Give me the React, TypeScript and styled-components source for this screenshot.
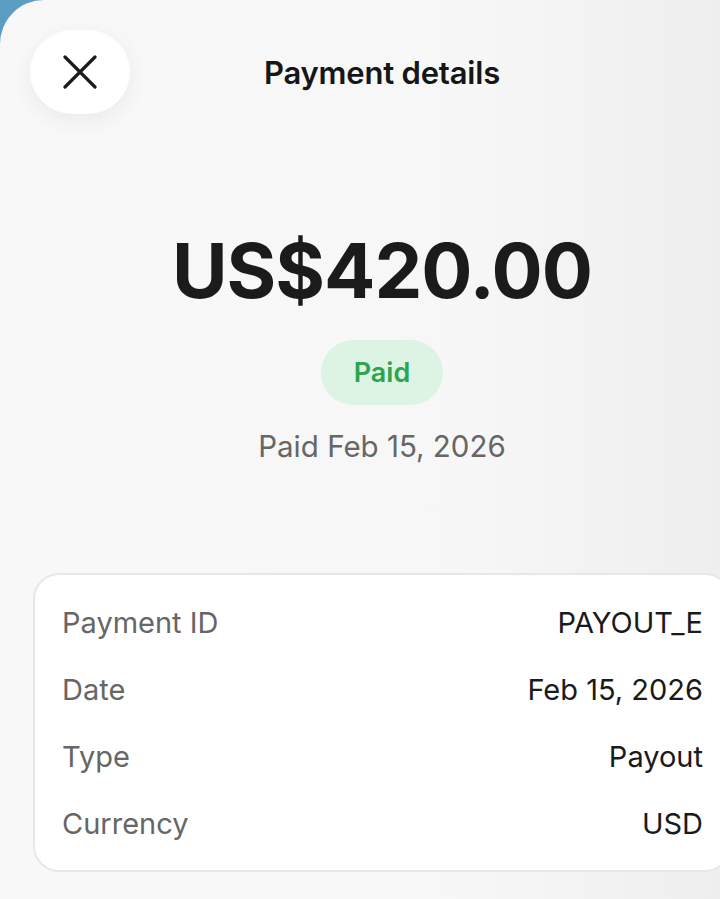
import styled, { createGlobalStyle } from 'styled-components';

const GlobalStyle = createGlobalStyle`
  html, body {
    margin: 0;
    padding: 0;
    background: #5b9ec4;
    overflow: hidden;
  }
  body {
    font-family: Inter, "Noto Sans", sans-serif;
    -webkit-font-smoothing: antialiased;
  }
`;

const Sheet = styled.div`
  width: 764px;
  height: 899px;
  border-top-left-radius: 44px;
  background: linear-gradient(90deg, #f8f8f8 0%, #f7f7f7 60%, #ededed 100%);
  display: flex;
  flex-direction: column;
  align-items: center;
  box-sizing: border-box;
  padding-top: 30px;
`;

const Header = styled.div`
  position: relative;
  width: 100%;
  height: 84px;
  display: flex;
  align-items: center;
  justify-content: center;
`;

const CloseButton = styled.button`
  position: absolute;
  left: 30px;
  top: 0;
  width: 100px;
  height: 84px;
  border: none;
  border-radius: 42px;
  background: #ffffff;
  box-shadow: 0 6px 22px rgba(0, 0, 0, 0.06);
  display: flex;
  align-items: center;
  justify-content: center;
  padding: 0;
`;

const Title = styled.h1`
  margin: 0;
  font-size: 31px;
  font-weight: 600;
  color: #161616;
  letter-spacing: -0.2px;
`;

const Amount = styled.div`
  margin-top: 118px;
  font-size: 76px;
  line-height: 1;
  font-weight: 700;
  color: #1b1b1b;
  letter-spacing: -1px;
`;

const Badge = styled.div`
  margin-top: 32px;
  width: 122px;
  height: 65px;
  border-radius: 33px;
  background: #ddf3e3;
  color: #2ea44f;
  font-size: 27px;
  font-weight: 600;
  display: flex;
  align-items: center;
  justify-content: center;
`;

const PaidOn = styled.div`
  margin-top: 24px;
  font-size: 29.5px;
  line-height: 34px;
  color: #666666;
`;

const Card = styled.div`
  margin-top: 110px;
  width: 698px;
  box-sizing: border-box;
  background: #ffffff;
  border: 2px solid #e7e7e7;
  border-radius: 26px;
  padding: 31px 26px 29px 27px;
  display: flex;
  flex-direction: column;
  gap: 33px;
`;

const Row = styled.div`
  display: flex;
  justify-content: space-between;
  align-items: center;
  font-size: 29px;
  line-height: 34px;
`;

const Label = styled.span`
  color: #666666;
`;

const Value = styled.span`
  color: #1a1a1a;
`;

const rows: [string, string][] = [
  ['Payment ID', 'PAYOUT_E'],
  ['Date', 'Feb 15, 2026'],
  ['Type', 'Payout'],
  ['Currency', 'USD'],
];

export default function App() {
  return (
    <>
      <GlobalStyle />
      <Sheet>
        <Header>
          <CloseButton aria-label="Close">
            <svg width="34" height="34" viewBox="0 0 34 34" fill="none">
              <path d="M2 2L32 32M32 2L2 32" stroke="#1c1c1c" strokeWidth="3.2" strokeLinecap="round" />
            </svg>
          </CloseButton>
          <Title>Payment details</Title>
        </Header>
        <Amount>US$420.00</Amount>
        <Badge>Paid</Badge>
        <PaidOn>Paid Feb 15, 2026</PaidOn>
        <Card>
          {rows.map(([label, value]) => (
            <Row key={label}>
              <Label>{label}</Label>
              <Value>{value}</Value>
            </Row>
          ))}
        </Card>
      </Sheet>
    </>
  );
}
